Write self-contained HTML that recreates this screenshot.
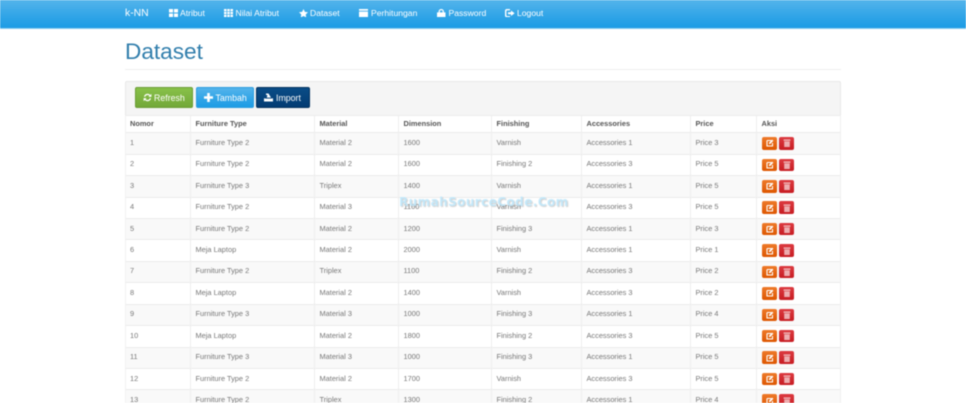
<!DOCTYPE html>
<html><head><meta charset="utf-8"><title>Dataset</title>
<style>
html,body{margin:0;padding:0;width:966px;height:403px;overflow:hidden;background:#fff}
body{font-family:"Liberation Sans",sans-serif;position:relative}
#w{position:absolute;left:0;top:0;width:966px;height:403px;overflow:hidden;filter:blur(.5px)}
.nav{position:absolute;left:0;top:0;width:966px;height:29px;background:linear-gradient(#54b4eb,#2fa4e7 60%,#1d9ce5);border-bottom:1px solid #8fcdf0;box-sizing:border-box}
.nav span{position:absolute;top:8px;color:#fff;font-size:8.6px;line-height:11px;white-space:nowrap}
.nav svg{position:absolute;fill:#fff}
h1{position:absolute;left:125px;top:39px;margin:0;font-size:22.6px;line-height:26px;font-weight:400;color:#317eac}
.hr{position:absolute;left:125px;top:69px;width:716px;height:1px;background:#eee}
.panel{position:absolute;left:125px;top:81px;width:716px;height:34px;background:#f5f5f5;border:1px solid #e8e8e8;border-bottom:0;box-sizing:border-box;border-radius:2px 2px 0 0}
.b{position:absolute;top:87px;height:21px;border-radius:2px;color:#fff;font-size:8.8px;line-height:20px;box-sizing:border-box;white-space:nowrap}
.b svg{position:absolute;top:6px;fill:#fff}
.b span{position:absolute;top:0}
.r{position:absolute;left:125px;width:716px;height:21.45px;display:grid;grid-template-columns:65px 124px 84px 93px 90px 109px 66px 85px;font-size:7.4px;line-height:10px;color:#777;box-sizing:border-box;border-top:1px solid #ececec;border-left:1px solid #f2f2f2;border-right:1px solid #f0f0f0}
.r.o{background:#f9f9f9}
.r div{padding:4.6px 0 0 4.5px;border-right:1px solid #eee;box-sizing:border-box;white-space:nowrap;position:relative}
.r div:first-child{padding-left:4px}
.r div:last-child{border-right:0}
.r.h{color:#555;font-weight:700;background:#fff;height:18px}
.r.h div{padding-top:3px}
.e,.d{position:absolute;top:3.9px;width:15px;height:12.5px;border-radius:2px}
.e{left:5px;background:linear-gradient(#ee7a2a,#dd5600)}
.d{left:22px;background:linear-gradient(#dc3a40,#c71c22)}
.e svg,.d svg{position:absolute;left:3.5px;top:2.3px;width:8px;height:8px}
.wm{position:absolute;left:399px;top:195px;font-family:"DejaVu Sans",sans-serif;font-weight:700;font-size:12px;line-height:15px;letter-spacing:.43px;color:rgba(190,232,252,.85);text-shadow:1px 1px 1px rgba(120,120,120,.35);white-space:nowrap}
</style></head><body><div id="w">
<div class="nav">
<span style="left:125px;font-size:10.4px;top:8px;line-height:12px">k-NN</span>
<svg style="left:169px;top:9px" width="9" height="8" viewBox="0 0 9 8"><path d="M0 0h4v3.5H0zM5 0h4v3.5H5zM0 4.5h4V8H0zM5 4.5h4V8H5z"/></svg>
<span style="left:180px">Atribut</span>
<svg style="left:224px;top:9px" width="9" height="8" viewBox="0 0 9 8"><path d="M0 0h2.5v2.3H0zM3.2 0h2.6v2.3H3.2zM6.5 0H9v2.3H6.5zM0 2.9h2.5v2.2H0zM3.2 2.9h2.6v2.2H3.2zM6.5 2.9H9v2.2H6.5zM0 5.7h2.5V8H0zM3.2 5.7h2.6V8H3.2zM6.5 5.7H9V8H6.5z"/></svg>
<span style="left:235.5px">Nilai Atribut</span>
<svg style="left:299px;top:8.5px" width="9" height="8.5" viewBox="0 0 9 8.5"><path d="M4.5 0l1.4 2.9 3.1.4-2.3 2.2.6 3-2.8-1.5-2.8 1.5.6-3L0 3.3l3.1-.4z"/></svg>
<span style="left:310px">Dataset</span>
<svg style="left:359px;top:9px" width="9" height="8" viewBox="0 0 9 8"><path d="M0 0h9v1.8H0zM0 2.6h9V8H0z"/></svg>
<span style="left:371px">Perhitungan</span>
<svg style="left:437px;top:8.5px" width="8.5" height="8.5" viewBox="0 0 8.5 8.5"><path d="M0 3.4h1.6V2.4a2.65 2.4 0 0 1 5.3 0v1h1.6v5.1H0zM2.9 3.4h2.7V2.4a1.35 1.2 0 0 0-2.7 0z"/></svg>
<span style="left:448.5px">Password</span>
<svg style="left:505px;top:8.5px" width="10" height="8.5" viewBox="0 0 10 8.5"><path d="M2 0h3v1.4H2.2a.8.8 0 0 0-.8.8v4a.8.8 0 0 0 .8.8H5v1.4H2a2 2 0 0 1-2-2V2a2 2 0 0 1 2-2zM6 1.5l3.6 2.7L6 7V5.2H3V3.3h3z"/></svg>
<span style="left:517px">Logout</span>
</div>
<h1>Dataset</h1>
<div class="hr"></div>
<div class="panel"></div>
<div class="b" style="left:135px;width:58px;background:linear-gradient(#88c149,#73a839);border:1px solid #6b9d35"><svg style="left:7px;top:5px" width="9" height="9" viewBox="0 0 9 9"><path d="M1 3.6A3.6 3.6 0 0 1 7.2 2L8.4.9v3H5.4l1-1A2.4 2.4 0 0 0 2.2 3.9zM8 5.4A3.6 3.6 0 0 1 1.8 7L.6 8.1v-3h3l-1 1a2.4 2.4 0 0 0 4.2-1z"/></svg><span style="left:18px">Refresh</span></div>
<div class="b" style="left:196px;width:58px;background:linear-gradient(#54b4eb,#2fa4e7 60%,#1d9ce5);border:1px solid #2b9de0"><svg style="left:7px;top:5px" width="9" height="9" viewBox="0 0 9 9"><path d="M3.2 0h2.6v3.2H9v2.6H5.8V9H3.2V5.8H0V3.2h3.2z"/></svg><span style="left:18.5px">Tambah</span></div>
<div class="b" style="left:256px;width:54px;background:linear-gradient(#0a4c86,#033c73);border:1px solid #03325f"><svg style="left:7px;top:5px" width="9" height="9" viewBox="0 0 9 9"><path d="M2 0.5h2.5L7 4.6H2.8L3.4 2H2zM0 5.2l2 .4h5l2-.4V8.5H0z"/></svg><span style="left:19px">Import</span></div>

<div class="r h" style="top:115px"><div>Nomor</div><div>Furniture Type</div><div>Material</div><div>Dimension</div><div>Finishing</div><div>Accessories</div><div>Price</div><div>Aksi</div></div>

<div class="r o" style="top:132.3px"><div>1</div><div>Furniture Type 2</div><div>Material 2</div><div>1600</div><div>Varnish</div><div>Accessories 1</div><div>Price 3</div><div><i class="e"><svg viewBox="0 0 8 8"><path d="M1 1.5h4.5M1 1.5v5.5h5.5V4" fill="none" stroke="#fff" stroke-width="1.1"/><path d="M3 3.7L6.3.6l1.1 1.1L4.2 5H3z" fill="#fff"/></svg></i><i class="d"><svg viewBox="0 0 8 8"><path d="M.6.4h6.8v1.5H.6zM1.2 2.4h5.6V8H1.2z" fill="#fff" opacity=".62"/></svg></i></div></div>
<div class="r" style="top:153.8px"><div>2</div><div>Furniture Type 2</div><div>Material 2</div><div>1600</div><div>Finishing 2</div><div>Accessories 3</div><div>Price 5</div><div><i class="e"><svg viewBox="0 0 8 8"><path d="M1 1.5h4.5M1 1.5v5.5h5.5V4" fill="none" stroke="#fff" stroke-width="1.1"/><path d="M3 3.7L6.3.6l1.1 1.1L4.2 5H3z" fill="#fff"/></svg></i><i class="d"><svg viewBox="0 0 8 8"><path d="M.6.4h6.8v1.5H.6zM1.2 2.4h5.6V8H1.2z" fill="#fff" opacity=".62"/></svg></i></div></div>
<div class="r o" style="top:175.2px"><div>3</div><div>Furniture Type 3</div><div>Triplex</div><div>1400</div><div>Varnish</div><div>Accessories 1</div><div>Price 5</div><div><i class="e"><svg viewBox="0 0 8 8"><path d="M1 1.5h4.5M1 1.5v5.5h5.5V4" fill="none" stroke="#fff" stroke-width="1.1"/><path d="M3 3.7L6.3.6l1.1 1.1L4.2 5H3z" fill="#fff"/></svg></i><i class="d"><svg viewBox="0 0 8 8"><path d="M.6.4h6.8v1.5H.6zM1.2 2.4h5.6V8H1.2z" fill="#fff" opacity=".62"/></svg></i></div></div>
<div class="r" style="top:196.6px"><div>4</div><div>Furniture Type 2</div><div>Material 3</div><div>1100</div><div>Varnish</div><div>Accessories 3</div><div>Price 5</div><div><i class="e"><svg viewBox="0 0 8 8"><path d="M1 1.5h4.5M1 1.5v5.5h5.5V4" fill="none" stroke="#fff" stroke-width="1.1"/><path d="M3 3.7L6.3.6l1.1 1.1L4.2 5H3z" fill="#fff"/></svg></i><i class="d"><svg viewBox="0 0 8 8"><path d="M.6.4h6.8v1.5H.6zM1.2 2.4h5.6V8H1.2z" fill="#fff" opacity=".62"/></svg></i></div></div>
<div class="r o" style="top:218px"><div>5</div><div>Furniture Type 2</div><div>Material 2</div><div>1200</div><div>Finishing 3</div><div>Accessories 1</div><div>Price 3</div><div><i class="e"><svg viewBox="0 0 8 8"><path d="M1 1.5h4.5M1 1.5v5.5h5.5V4" fill="none" stroke="#fff" stroke-width="1.1"/><path d="M3 3.7L6.3.6l1.1 1.1L4.2 5H3z" fill="#fff"/></svg></i><i class="d"><svg viewBox="0 0 8 8"><path d="M.6.4h6.8v1.5H.6zM1.2 2.4h5.6V8H1.2z" fill="#fff" opacity=".62"/></svg></i></div></div>
<div class="r" style="top:239.4px"><div>6</div><div>Meja Laptop</div><div>Material 2</div><div>2000</div><div>Varnish</div><div>Accessories 1</div><div>Price 1</div><div><i class="e"><svg viewBox="0 0 8 8"><path d="M1 1.5h4.5M1 1.5v5.5h5.5V4" fill="none" stroke="#fff" stroke-width="1.1"/><path d="M3 3.7L6.3.6l1.1 1.1L4.2 5H3z" fill="#fff"/></svg></i><i class="d"><svg viewBox="0 0 8 8"><path d="M.6.4h6.8v1.5H.6zM1.2 2.4h5.6V8H1.2z" fill="#fff" opacity=".62"/></svg></i></div></div>
<div class="r o" style="top:260.9px"><div>7</div><div>Furniture Type 2</div><div>Triplex</div><div>1100</div><div>Finishing 2</div><div>Accessories 3</div><div>Price 2</div><div><i class="e"><svg viewBox="0 0 8 8"><path d="M1 1.5h4.5M1 1.5v5.5h5.5V4" fill="none" stroke="#fff" stroke-width="1.1"/><path d="M3 3.7L6.3.6l1.1 1.1L4.2 5H3z" fill="#fff"/></svg></i><i class="d"><svg viewBox="0 0 8 8"><path d="M.6.4h6.8v1.5H.6zM1.2 2.4h5.6V8H1.2z" fill="#fff" opacity=".62"/></svg></i></div></div>
<div class="r" style="top:282.3px"><div>8</div><div>Meja Laptop</div><div>Material 2</div><div>1400</div><div>Varnish</div><div>Accessories 3</div><div>Price 2</div><div><i class="e"><svg viewBox="0 0 8 8"><path d="M1 1.5h4.5M1 1.5v5.5h5.5V4" fill="none" stroke="#fff" stroke-width="1.1"/><path d="M3 3.7L6.3.6l1.1 1.1L4.2 5H3z" fill="#fff"/></svg></i><i class="d"><svg viewBox="0 0 8 8"><path d="M.6.4h6.8v1.5H.6zM1.2 2.4h5.6V8H1.2z" fill="#fff" opacity=".62"/></svg></i></div></div>
<div class="r o" style="top:303.7px"><div>9</div><div>Furniture Type 3</div><div>Material 3</div><div>1000</div><div>Finishing 3</div><div>Accessories 1</div><div>Price 4</div><div><i class="e"><svg viewBox="0 0 8 8"><path d="M1 1.5h4.5M1 1.5v5.5h5.5V4" fill="none" stroke="#fff" stroke-width="1.1"/><path d="M3 3.7L6.3.6l1.1 1.1L4.2 5H3z" fill="#fff"/></svg></i><i class="d"><svg viewBox="0 0 8 8"><path d="M.6.4h6.8v1.5H.6zM1.2 2.4h5.6V8H1.2z" fill="#fff" opacity=".62"/></svg></i></div></div>
<div class="r" style="top:325.1px"><div>10</div><div>Meja Laptop</div><div>Material 2</div><div>1800</div><div>Finishing 2</div><div>Accessories 3</div><div>Price 5</div><div><i class="e"><svg viewBox="0 0 8 8"><path d="M1 1.5h4.5M1 1.5v5.5h5.5V4" fill="none" stroke="#fff" stroke-width="1.1"/><path d="M3 3.7L6.3.6l1.1 1.1L4.2 5H3z" fill="#fff"/></svg></i><i class="d"><svg viewBox="0 0 8 8"><path d="M.6.4h6.8v1.5H.6zM1.2 2.4h5.6V8H1.2z" fill="#fff" opacity=".62"/></svg></i></div></div>
<div class="r o" style="top:346.6px"><div>11</div><div>Furniture Type 3</div><div>Material 3</div><div>1000</div><div>Finishing 3</div><div>Accessories 1</div><div>Price 5</div><div><i class="e"><svg viewBox="0 0 8 8"><path d="M1 1.5h4.5M1 1.5v5.5h5.5V4" fill="none" stroke="#fff" stroke-width="1.1"/><path d="M3 3.7L6.3.6l1.1 1.1L4.2 5H3z" fill="#fff"/></svg></i><i class="d"><svg viewBox="0 0 8 8"><path d="M.6.4h6.8v1.5H.6zM1.2 2.4h5.6V8H1.2z" fill="#fff" opacity=".62"/></svg></i></div></div>
<div class="r" style="top:368px"><div>12</div><div>Furniture Type 2</div><div>Material 2</div><div>1700</div><div>Varnish</div><div>Accessories 3</div><div>Price 5</div><div><i class="e"><svg viewBox="0 0 8 8"><path d="M1 1.5h4.5M1 1.5v5.5h5.5V4" fill="none" stroke="#fff" stroke-width="1.1"/><path d="M3 3.7L6.3.6l1.1 1.1L4.2 5H3z" fill="#fff"/></svg></i><i class="d"><svg viewBox="0 0 8 8"><path d="M.6.4h6.8v1.5H.6zM1.2 2.4h5.6V8H1.2z" fill="#fff" opacity=".62"/></svg></i></div></div>
<div class="r o" style="top:389.4px"><div>13</div><div>Furniture Type 2</div><div>Triplex</div><div>1300</div><div>Finishing 2</div><div>Accessories 1</div><div>Price 4</div><div><i class="e"><svg viewBox="0 0 8 8"><path d="M1 1.5h4.5M1 1.5v5.5h5.5V4" fill="none" stroke="#fff" stroke-width="1.1"/><path d="M3 3.7L6.3.6l1.1 1.1L4.2 5H3z" fill="#fff"/></svg></i><i class="d"><svg viewBox="0 0 8 8"><path d="M.6.4h6.8v1.5H.6zM1.2 2.4h5.6V8H1.2z" fill="#fff" opacity=".62"/></svg></i></div></div>

<div class="wm">RumahSourceCode.Com</div>
</div></body></html>
